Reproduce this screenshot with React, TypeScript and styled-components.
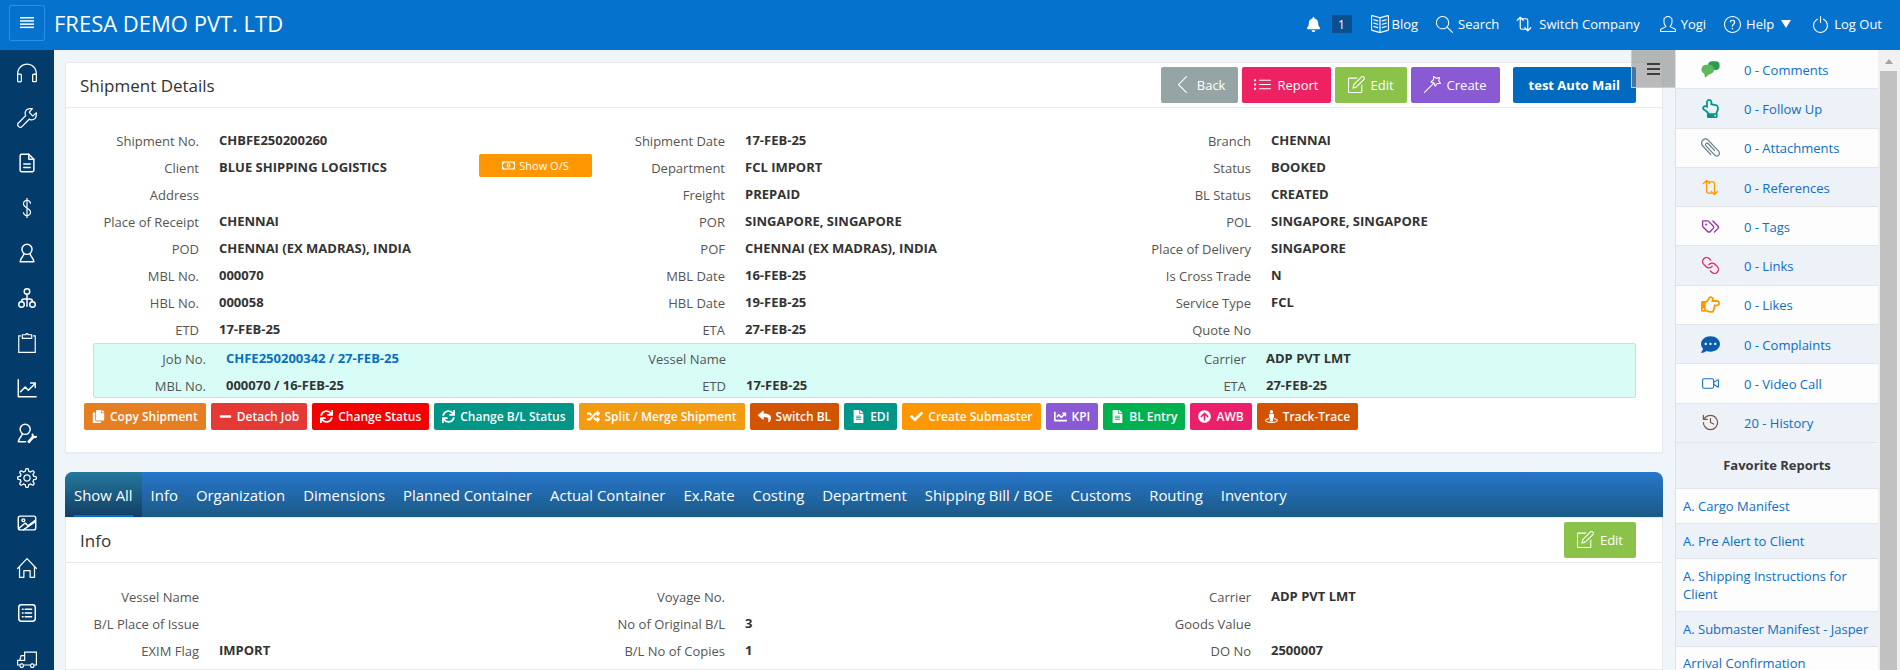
import React from 'react';
import styled, { createGlobalStyle } from 'styled-components';
import {
  SlBookOpen, SlMagnifier, SlUser, SlQuestion, SlPower, SlEarphones, SlWrench,
  SlPaperClip, SlSettings, SlHome, SlNote, SlMagicWand, SlArrowLeft, SlList,
} from 'react-icons/sl';
import { TfiClipboard, TfiTruck, TfiMoney } from 'react-icons/tfi';
import {
  FaBell, FaCommentDots, FaCopy, FaMinus, FaSync, FaRandom, FaReply, FaFileAlt, FaCheck, FaChartLine,
  FaArrowCircleUp, FaStreetView, FaRegMoneyBillAlt, FaRegHandPointUp, FaRegHandPointRight,
} from 'react-icons/fa';
import { LuTags, LuLink, LuVideo, LuHistory } from 'react-icons/lu';

const GlobalStyle = createGlobalStyle`
  html, body {
    margin: 0;
    padding: 0;
    height: 100%;
    overflow: hidden;
    font-family: 'Open Sans', 'Noto Sans', sans-serif;
    font-size: 13px;
    color: #3a3a3a;
  }
  * {
    box-sizing: border-box;
  }
`;

const Page = styled.div`
  width: 1900px;
  height: 670px;
  display: flex;
  flex-direction: column;
  overflow: hidden;
  background: #f0f5f9;
  position: relative;
`;

const TopBar = styled.header`
  height: 50px;
  flex: none;
  background: #0573ce;
  display: flex;
  align-items: center;
  padding: 0 18px 0 9px;
  color: white;
`;

const MenuToggle = styled.button`
  width: 36px;
  height: 36px;
  margin-top: -4px;
  background: #0573ce;
  border: 1px solid #2a8fe6;
  border-radius: 2px;
  color: white;
  display: flex;
  align-items: center;
  justify-content: center;
  padding: 0;
`;

const Brand = styled.div`
  font-size: 22px;
  margin-left: 9px;
  margin-top: -4px;
  flex: 1;
`;

const TopLink = styled.a<{ $gap?: number; $inner?: number }>`
  display: flex;
  align-items: center;
  gap: ${p => p.$inner ?? 5}px;
  margin-left: ${p => p.$gap ?? 18}px;
  font-size: 13px;
  color: white;
  margin-top: -2px;
`;

const Badge = styled.span`
  width: 20px;
  height: 18px;
  margin-left: 11px;
  margin-top: -2px;
  background: #0a4f8f;
  border-radius: 1px;
  font-size: 12px;
  display: flex;
  align-items: center;
  justify-content: center;
  color: white;
`;

const Caret = styled.span`
  width: 0;
  height: 0;
  margin-left: 2px;
  border-left: 5px solid transparent;
  border-right: 5px solid transparent;
  border-top: 8px solid white;
`;

const Body = styled.div`
  flex: 1;
  min-height: 0;
  display: flex;
`;

const SideNav = styled.nav`
  width: 54px;
  flex: none;
  background: #033c6b;
  display: flex;
  flex-direction: column;
  color: white;
  font-size: 20px;
`;

const NavItem = styled.a`
  height: 45px;
  flex: none;
  display: flex;
  align-items: center;
  justify-content: center;
  svg {
    display: block;
  }
`;

const Content = styled.main`
  width: 1621px;
  flex: none;
  padding: 12px 12px 0 11px;
  display: flex;
  flex-direction: column;
  overflow: hidden;
`;

const Panel = styled.section`
  background: white;
  border: 1px solid #e6eaee;
  border-radius: 2px;
  box-shadow: 0 1px 2px rgba(0, 0, 0, 0.04);
  height: 391px;
  flex: none;
`;

const PanelHead = styled.div`
  height: 46px;
  border-bottom: 1px solid #e8ebee;
  display: flex;
  align-items: center;
  padding: 0 26px 0 14px;
  margin-top: -1px;
`;

const PanelTitle = styled.h2`
  margin: 0;
  padding-top: 2px;
  font-size: 17px;
  font-weight: 400;
  color: #333;
  flex: 1;
`;

const TopButton = styled.button<{ $bg: string; $gap?: number; $bold?: boolean; $pad?: number }>`
  height: 36px;
  margin-left: ${p => p.$gap ?? 4}px;
  padding: 0 ${p => p.$pad ?? 13}px;
  background: ${p => p.$bg};
  border: none;
  border-radius: 2px;
  color: white;
  font-family: inherit;
  font-size: 13px;
  font-weight: ${p => (p.$bold ? 700 : 400)};
  display: flex;
  align-items: center;
  gap: 6px;
  svg {
    font-size: 17px;
  }
`;

const Fields = styled.div<{ $col: number; $label: number }>`
  display: grid;
  grid-template-columns: repeat(3, ${p => p.$col}px);
  grid-auto-rows: 27px;
  --label: ${p => p.$label}px;
`;

const Field = styled.div`
  display: flex;
  align-items: center;
  min-width: 0;
`;

const Label = styled.span`
  width: var(--label);
  flex: none;
  text-align: right;
  color: #555;
  margin-right: 20px;
  font-size: 13px;
`;

const Value = styled.span<{ $link?: boolean; $wide?: number }>`
  font-weight: 700;
  font-size: 13px;
  color: ${p => (p.$link ? '#0a6ebd' : '#333')};
  margin-top: -2px;
  ${p => (p.$wide ? `width: ${p.$wide}px; flex: none;` : '')}
`;

const MainFields = styled.div`
  padding: 19px 0 0 10px;
`;

const ShowOs = styled.button`
  width: 113px;
  height: 23px;
  margin-top: -4px;
  background: #ff9800;
  border: none;
  border-radius: 2px;
  color: white;
  font-family: inherit;
  font-size: 11px;
  display: flex;
  align-items: center;
  justify-content: center;
  gap: 4px;
  padding: 0;
`;

const JobBox = styled.div`
  margin-left: 27px;
  width: 1543px;
  height: 55px;
  background: #d8fdf6;
  border: 1px solid #bfe5dc;
  border-radius: 2px;
  padding: 1px 0 0 0;
`;

const ActionRow = styled.div`
  display: flex;
  gap: 5px;
  margin: 5px 0 0 18px;
`;

const Action = styled.button<{ $bg: string }>`
  height: 27px;
  padding: 0 8px;
  background: ${p => p.$bg};
  border: none;
  border-radius: 2px;
  color: white;
  font-family: inherit;
  font-size: 12px;
  font-weight: 600;
  display: flex;
  align-items: center;
  gap: 5px;
  white-space: nowrap;
  svg {
    font-size: 13px;
  }
`;

const TabBar = styled.div`
  margin-top: 19px;
  height: 45px;
  flex: none;
  display: flex;
  border-radius: 8px 8px 0 0;
  overflow: hidden;
  background: linear-gradient(#2776c9, #1b5a87);
`;

const Tab = styled.a<{ $active?: boolean }>`
  height: 100%;
  padding: 0 9px;
  display: flex;
  align-items: center;
  position: relative;
  font-size: 14.9px;
  color: white;
  background: ${p => (p.$active ? 'linear-gradient(#25789e, #123e64)' : 'transparent')};
  ${p =>
    p.$active
      ? `&::after {
          content: '';
          position: absolute;
          left: 9px;
          right: 9px;
          bottom: 0;
          height: 2px;
          background: #0573ce;
        }`
      : ''}
`;

const InfoPanel = styled.section`
  background: white;
  border: 1px solid #e6eaee;
  flex: 1;
`;

const InfoFields = styled.div`
  padding: 20px 0 0 10px;
`;

const RightColumn = styled.aside`
  width: 203px;
  flex: none;
  background: #fff;
  border-left: 1px solid #d8e2ec;
  overflow: hidden;
`;

const CountRow = styled.a<{ $alt?: boolean }>`
  height: 39.3px;
  display: flex;
  align-items: center;
  background: ${p => (p.$alt ? '#edf1f8' : '#fdfdfd')};
  border-bottom: 1px solid #e2e5ea;
  color: #0b6ec9;
  font-size: 13px;
`;

const IconCell = styled.span<{ $color: string }>`
  width: 68px;
  flex: none;
  display: flex;
  justify-content: center;
  font-size: 19px;
  color: ${p => p.$color};
`;

const CountText = styled.span`
  padding-top: 1px;
`;

const Mirrored = styled.span`
  display: flex;
  transform: scaleX(-1);
`;

const FavHead = styled.div`
  height: 46px;
  background: #edf1f8;
  border-bottom: 1px solid #e2e5ea;
  font-weight: 700;
  font-size: 13px;
  color: #3a3a3a;
  display: flex;
  align-items: center;
  justify-content: center;
`;

const ReportRow = styled.a<{ $alt?: boolean }>`
  display: block;
  padding: 8px 7px 8px;
  line-height: 18px;
  background: ${p => (p.$alt ? '#edf1f8' : '#fdfdfd')};
  border-bottom: 1px solid #e2e5ea;
  color: #0b6ec9;
  font-size: 13px;
  &:last-child {
    padding: 9px 7px 0;
    line-height: 15px;
    border-bottom: none;
  }
`;

const ScrollTrack = styled.div`
  flex: 1;
  padding: 0 3px 0 2px;
  display: flex;
  flex-direction: column;
  background: #f1f1f1;
`;

const ScrollUp = styled.div`
  height: 21px;
  flex: none;
  display: flex;
  justify-content: center;
  padding-top: 9px;
  &::before {
    content: '';
    width: 0;
    height: 0;
    border-left: 4.5px solid transparent;
    border-right: 4.5px solid transparent;
    border-bottom: 5px solid #a3a3a3;
  }
`;

const ScrollThumb = styled.div`
  flex: 1;
  background: #c1c1c1;
`;

const PanelToggle = styled.button`
  position: absolute;
  left: 1631px;
  top: 50px;
  width: 44px;
  height: 38px;
  padding: 0;
  border: 1px solid #b4d2ec;
  border-top: none;
  border-right: none;
  background: rgba(130, 130, 130, 0.55);
  color: #3d3d3d;
  display: flex;
  align-items: center;
  justify-content: center;
`;

function Glyph({ children, size }: { children: React.ReactNode; size?: number }) {
  return (
    <svg
      width={size ?? '1.1em'}
      height={size ?? '1.1em'}
      viewBox="0 0 24 24"
      fill="none"
      stroke="currentColor"
      strokeWidth={1.6}
      strokeLinecap="round"
      strokeLinejoin="round"
    >
      {children}
    </svg>
  );
}

const DocIcon = () => (
  <Glyph>
    <path d="M14 2.5H6A1.5 1.5 0 0 0 4.5 4v16A1.5 1.5 0 0 0 6 21.5h12a1.5 1.5 0 0 0 1.5-1.5V8z" />
    <path d="M14 2.5V8h5.5M8.5 13h7M8.5 17h7" />
  </Glyph>
);

const PersonIcon = () => (
  <Glyph>
    <circle cx="12" cy="8" r="5.5" />
    <path d="M8.5 13c-.3 3-3.5 4-4 8.500h15c-.5-4.500-3.700-5.500-4-8.500" />
  </Glyph>
);

const TreeIcon = () => (
  <Glyph>
    <circle cx="12" cy="5" r="3" />
    <circle cx="6" cy="19" r="3" />
    <circle cx="18" cy="19" r="3" />
    <path d="M12 8v5M6 16c0-2 1-3 3-3h6c2 0 3 1 3 3M12 13v8" />
  </Glyph>
);

const ChartIcon = () => (
  <Glyph>
    <path d="M2.500 3v18.500H22" />
    <path d="M5 16l5-5 3.500 3.500L21 7" />
    <path d="M16 6.500h5v5" />
  </Glyph>
);

const UserToolIcon = () => (
  <Glyph>
    <circle cx="10" cy="8" r="5.500" />
    <path d="M7 13c-.5 2.500-3.500 3.500-4.500 8.500h8" />
    <path d="M14 21.500l5-5.500" strokeWidth={3} />
    <path d="M18 13.500a2.500 2.500 0 0 0 4 2.500" strokeWidth={2} />
  </Glyph>
);

const PictureIcon = () => (
  <Glyph>
    <rect x="2.500" y="4.500" width="19" height="15" rx="2" />
    <circle cx="8" cy="9" r="1.500" />
    <path d="M3 18l7-6 3 3 8-6M8 19.500l13-9" />
  </Glyph>
);

const ListBoxIcon = () => (
  <Glyph>
    <rect x="3" y="3" width="18" height="18" rx="3" />
    <path d="M7 8h.8M10 8h7M7 12h.8M10 12h7M7 16h.8M10 16h7" />
  </Glyph>
);

const SwapIcon = ({ size }: { size?: number }) => (
  <Glyph size={size}>
    <path d="M3 7l4-4 4 4M7 3v14a2 2 0 0 0 2 2h5" />
    <path d="M21 17l-4 4-4-4M17 21V7a2 2 0 0 0-2-2h-5" />
  </Glyph>
);

const StackedLines = ({ count, width, pitch, weight }: { count: number; width: number; pitch: number; weight: number }) => (
  <svg width={width} height={(count - 1) * pitch + weight} stroke="currentColor" strokeWidth={weight}>
    {Array.from({ length: count }, (_, i) => (
      <line key={i} x1={0} x2={width} y1={i * pitch + weight / 2} y2={i * pitch + weight / 2} />
    ))}
  </svg>
);

const BubblesIcon = () => (
  <svg width="1em" height="1em" viewBox="0 0 24 24">
    <rect x="9" y="1.500" width="14.500" height="11" rx="5" fill="#2e9b4f" />
    <rect x="0.500" y="6" width="16" height="12" rx="6" fill="#5cb85c" />
    <path d="M4 16l1 6.500 6-5z" fill="#5cb85c" />
  </svg>
);

const mainRows: [string, string][][] = [
  [['Shipment No.', 'CHBFE250200260'], ['Shipment Date', '17-FEB-25'], ['Branch', 'CHENNAI']],
  [['Client', 'BLUE SHIPPING LOGISTICS'], ['Department', 'FCL IMPORT'], ['Status', 'BOOKED']],
  [['Address', ''], ['Freight', 'PREPAID'], ['BL Status', 'CREATED']],
  [['Place of Receipt', 'CHENNAI'], ['POR', 'SINGAPORE, SINGAPORE'], ['POL', 'SINGAPORE, SINGAPORE']],
  [['POD', 'CHENNAI (EX MADRAS), INDIA'], ['POF', 'CHENNAI (EX MADRAS), INDIA'], ['Place of Delivery', 'SINGAPORE']],
  [['MBL No.', '000070'], ['MBL Date', '16-FEB-25'], ['Is Cross Trade', 'N']],
  [['HBL No.', '000058'], ['HBL Date', '19-FEB-25'], ['Service Type', 'FCL']],
  [['ETD', '17-FEB-25'], ['ETA', '27-FEB-25'], ['Quote No', '']],
];

const infoRows: [string, string][][] = [
  [['Vessel Name', ''], ['Voyage No.', ''], ['Carrier', 'ADP PVT LMT']],
  [['B/L Place of Issue', ''], ['No of Original B/L', '3'], ['Goods Value', '']],
  [['EXIM Flag', 'IMPORT'], ['B/L No of Copies', '1'], ['DO No', '2500007']],
];

const actions = [
  { text: 'Copy Shipment', bg: '#e67e22', icon: <FaCopy /> },
  { text: 'Detach Job', bg: '#e53935', icon: <FaMinus /> },
  { text: 'Change Status', bg: '#f40000', icon: <FaSync /> },
  { text: 'Change B/L Status', bg: '#009688', icon: <FaSync /> },
  { text: 'Split / Merge Shipment', bg: '#f39c12', icon: <FaRandom /> },
  { text: 'Switch BL', bg: '#d35400', icon: <FaReply /> },
  { text: 'EDI', bg: '#009688', icon: <FaFileAlt /> },
  { text: 'Create Submaster', bg: '#ff9800', icon: <FaCheck /> },
  { text: 'KPI', bg: '#8a5ad4', icon: <FaChartLine /> },
  { text: 'BL Entry', bg: '#00b14f', icon: <FaFileAlt /> },
  { text: 'AWB', bg: '#ec1f6a', icon: <FaArrowCircleUp /> },
  { text: 'Track-Trace', bg: '#d35400', icon: <FaStreetView /> },
];

const tabs = ['Show All', 'Info', 'Organization', 'Dimensions', 'Planned Container', 'Actual Container', 'Ex.Rate', 'Costing', 'Department', 'Shipping Bill / BOE', 'Customs', 'Routing', 'Inventory'];

const counts = [
  { text: '0 - Comments', color: '#4caf50', icon: <BubblesIcon /> },
  { text: '0 - Follow Up', color: '#009688', icon: <FaRegHandPointUp /> },
  { text: '0 - Attachments', color: '#607d8b', icon: <Mirrored><SlPaperClip /></Mirrored> },
  { text: '0 - References', color: '#ff9800', icon: <SwapIcon size={19} /> },
  { text: '0 - Tags', color: '#9c27b0', icon: <LuTags strokeWidth={1.6} /> },
  { text: '0 - Links', color: '#e91e63', icon: <Mirrored><LuLink strokeWidth={1.6} /></Mirrored> },
  { text: '0 - Likes', color: '#ff9800', icon: <FaRegHandPointRight /> },
  { text: '0 - Complaints', color: '#0b5cad', icon: <FaCommentDots /> },
  { text: '0 - Video Call', color: '#1e6fc0', icon: <LuVideo strokeWidth={1.4} /> },
  { text: '20 - History', color: '#795548', icon: <LuHistory strokeWidth={1.5} /> },
];

const reports = ['A. Cargo Manifest', 'A. Pre Alert to Client', 'A. Shipping Instructions for Client', 'A. Submaster Manifest - Jasper', 'Arrival Confirmation'];

const navIcons = [
  <SlEarphones />, <SlWrench />, <DocIcon />, <TfiMoney />, <PersonIcon />, <TreeIcon />, <TfiClipboard />,
  <ChartIcon />, <UserToolIcon />, <SlSettings />, <PictureIcon />, <SlHome />, <ListBoxIcon />, <TfiTruck />,
];

export default function App() {
  return (
    <Page>
      <GlobalStyle />
      <TopBar>
        <MenuToggle><StackedLines count={4} width={14} pitch={3.2} weight={1.5} /></MenuToggle>
        <Brand>FRESA DEMO PVT. LTD</Brand>
        <TopLink><FaBell size={15} /></TopLink>
        <Badge>1</Badge>
        <TopLink $gap={19} $inner={3}><SlBookOpen size={18} />Blog</TopLink>
        <TopLink><SlMagnifier size={17} />Search</TopLink>
        <TopLink $gap={16} $inner={6}><SwapIcon size={18} />Switch Company</TopLink>
        <TopLink $gap={20}><SlUser size={16} />Yogi</TopLink>
        <TopLink><SlQuestion size={17} />Help<Caret /></TopLink>
        <TopLink $gap={21}><SlPower size={17} />Log Out</TopLink>
      </TopBar>
      <Body>
        <SideNav>
          {navIcons.map((icon, i) => <NavItem key={i}>{icon}</NavItem>)}
        </SideNav>
        <Content>
          <Panel>
            <PanelHead>
              <PanelTitle>Shipment Details</PanelTitle>
              <TopButton $bg="#95a5a6"><SlArrowLeft />Back</TopButton>
              <TopButton $bg="#ee2163" $pad={12}><SlList />Report</TopButton>
              <TopButton $bg="#8bc34a"><SlNote />Edit</TopButton>
              <TopButton $bg="#8a5ad4"><SlMagicWand />Create</TopButton>
              <TopButton $bg="#0069c0" $gap={13} $bold $pad={16}>test Auto Mail</TopButton>
            </PanelHead>
            <MainFields>
              <Fields $col={526} $label={123}>
                {mainRows.flat().map(([label, value]) => (
                  <Field key={label}>
                    <Label>{label}</Label>
                    <Value $wide={label === 'Client' ? 260 : undefined}>{value}</Value>
                    {label === 'Client' && <ShowOs><FaRegMoneyBillAlt size={13} />Show O/S</ShowOs>}
                  </Field>
                ))}
              </Fields>
            </MainFields>
            <JobBox>
              <Fields $col={520} $label={112}>
                <Field><Label>Job No.</Label><Value $link>CHFE250200342 / 27-FEB-25</Value></Field>
                <Field><Label>Vessel Name</Label><Value /></Field>
                <Field><Label>Carrier</Label><Value>ADP PVT LMT</Value></Field>
                <Field><Label>MBL No.</Label><Value>000070 / 16-FEB-25</Value></Field>
                <Field><Label>ETD</Label><Value>17-FEB-25</Value></Field>
                <Field><Label>ETA</Label><Value>27-FEB-25</Value></Field>
              </Fields>
            </JobBox>
            <ActionRow>
              {actions.map(a => (
                <Action key={a.text} $bg={a.bg}>{a.icon}{a.text}</Action>
              ))}
            </ActionRow>
          </Panel>
          <TabBar>
            {tabs.map((t, i) => <Tab key={t} $active={i === 0}>{t}</Tab>)}
          </TabBar>
          <InfoPanel>
            <PanelHead>
              <PanelTitle>Info</PanelTitle>
              <TopButton $bg="#8bc34a"><SlNote />Edit</TopButton>
            </PanelHead>
            <InfoFields>
              <Fields $col={526} $label={123}>
                {infoRows.flat().map(([label, value]) => (
                  <Field key={label}><Label>{label}</Label><Value>{value}</Value></Field>
                ))}
              </Fields>
            </InfoFields>
          </InfoPanel>
        </Content>
        <RightColumn>
          {counts.map((c, i) => (
            <CountRow key={c.text} $alt={i % 2 === 1}>
              <IconCell $color={c.color}>{c.icon}</IconCell>
              <CountText>{c.text}</CountText>
            </CountRow>
          ))}
          <FavHead>Favorite Reports</FavHead>
          {reports.map((r, i) => <ReportRow key={r} $alt={i % 2 === 1}>{r}</ReportRow>)}
        </RightColumn>
        <ScrollTrack>
          <ScrollUp />
          <ScrollThumb />
        </ScrollTrack>
      </Body>
      <PanelToggle><StackedLines count={3} width={13} pitch={5} weight={2} /></PanelToggle>
    </Page>
  );
}
